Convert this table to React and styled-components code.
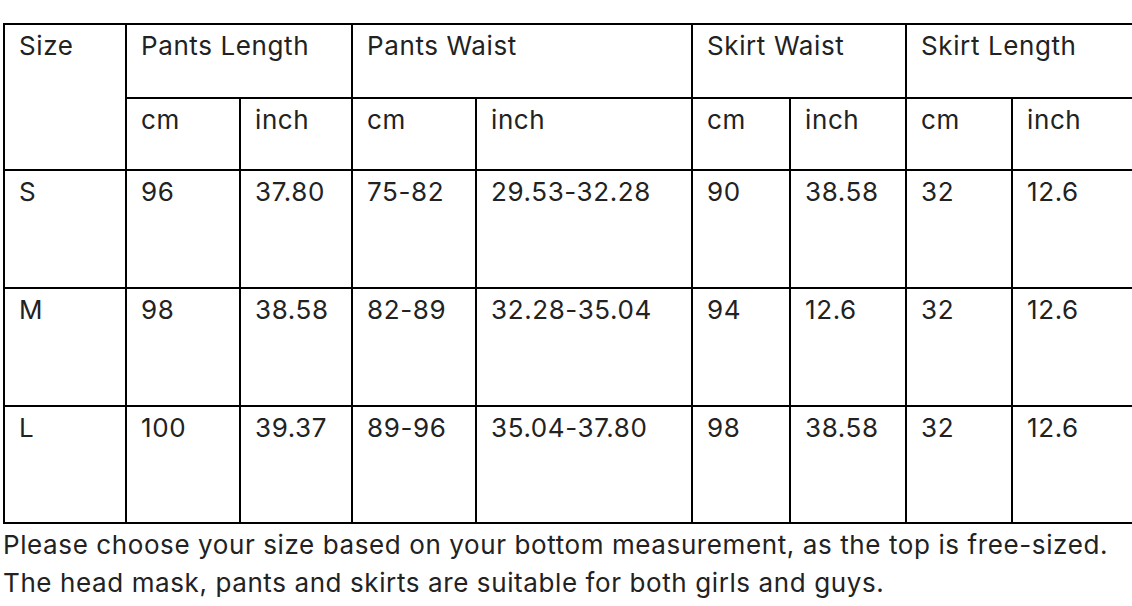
import React from "react";
import styled, { createGlobalStyle } from "styled-components";

const GlobalStyle = createGlobalStyle`
  html, body {
    margin: 0;
    padding: 0;
    background: #fff;
    overflow: hidden;
  }
  body {
    font-family: Inter, "Noto Sans", "Liberation Sans", sans-serif;
    color: #222;
  }
`;

const Page = styled.div`
  padding: 23px 0 0 3px;
  width: 1200px;
`;

const Table = styled.table`
  border-collapse: collapse;
  table-layout: fixed;
  width: 1160px;
`;

const Col = styled.col`
  width: ${(p) => p.$w}px;
`;

const Row = styled.tr`
  height: ${(p) => p.$h}px;
`;

const Cell = styled.td`
  border: 2px solid #000;
  vertical-align: top;
  padding: 2px 0 0 14px;
  font-size: 26px;
  line-height: 38px;
  letter-spacing: 0.6px;
  font-weight: 400;
  text-align: left;
  white-space: nowrap;
  color: #222;
`;

const Notes = styled.div`
  padding-top: 2px;
`;

const Note = styled.p`
  margin: 0;
  font-size: 26px;
  line-height: 38px;
  letter-spacing: 0.6px;
  color: #222;
  white-space: nowrap;
`;

const widths = [122, 114, 112, 124, 216, 98, 116, 106, 152];

const rows = [
  ["S", "96", "37.80", "75-82", "29.53-32.28", "90", "38.58", "32", "12.6"],
  ["M", "98", "38.58", "82-89", "32.28-35.04", "94", "12.6", "32", "12.6"],
  ["L", "100", "39.37", "89-96", "35.04-37.80", "98", "38.58", "32", "12.6"],
];

const rowHeights = [118, 118, 117];

export default function App() {
  return (
    <>
      <GlobalStyle />
      <Page>
        <Table>
          <colgroup>
            {widths.map((w, i) => (
              <Col key={i} $w={w} />
            ))}
          </colgroup>
          <tbody>
            <Row $h={74}>
              <Cell rowSpan={2}>Size</Cell>
              <Cell colSpan={2}>Pants Length</Cell>
              <Cell colSpan={2}>Pants Waist</Cell>
              <Cell colSpan={2}>Skirt Waist</Cell>
              <Cell colSpan={2}>Skirt Length</Cell>
            </Row>
            <Row $h={72}>
              <Cell>cm</Cell>
              <Cell>inch</Cell>
              <Cell>cm</Cell>
              <Cell>inch</Cell>
              <Cell>cm</Cell>
              <Cell>inch</Cell>
              <Cell>cm</Cell>
              <Cell>inch</Cell>
            </Row>
            {rows.map((r, i) => (
              <Row key={r[0]} $h={rowHeights[i]}>
                {r.map((v, j) => (
                  <Cell key={j}>{v}</Cell>
                ))}
              </Row>
            ))}
          </tbody>
        </Table>
        <Notes>
          <Note>
            Please choose your size based on your bottom measurement, as the top is free-sized.
          </Note>
          <Note>The head mask, pants and skirts are suitable for both girls and guys.</Note>
        </Notes>
      </Page>
    </>
  );
}
